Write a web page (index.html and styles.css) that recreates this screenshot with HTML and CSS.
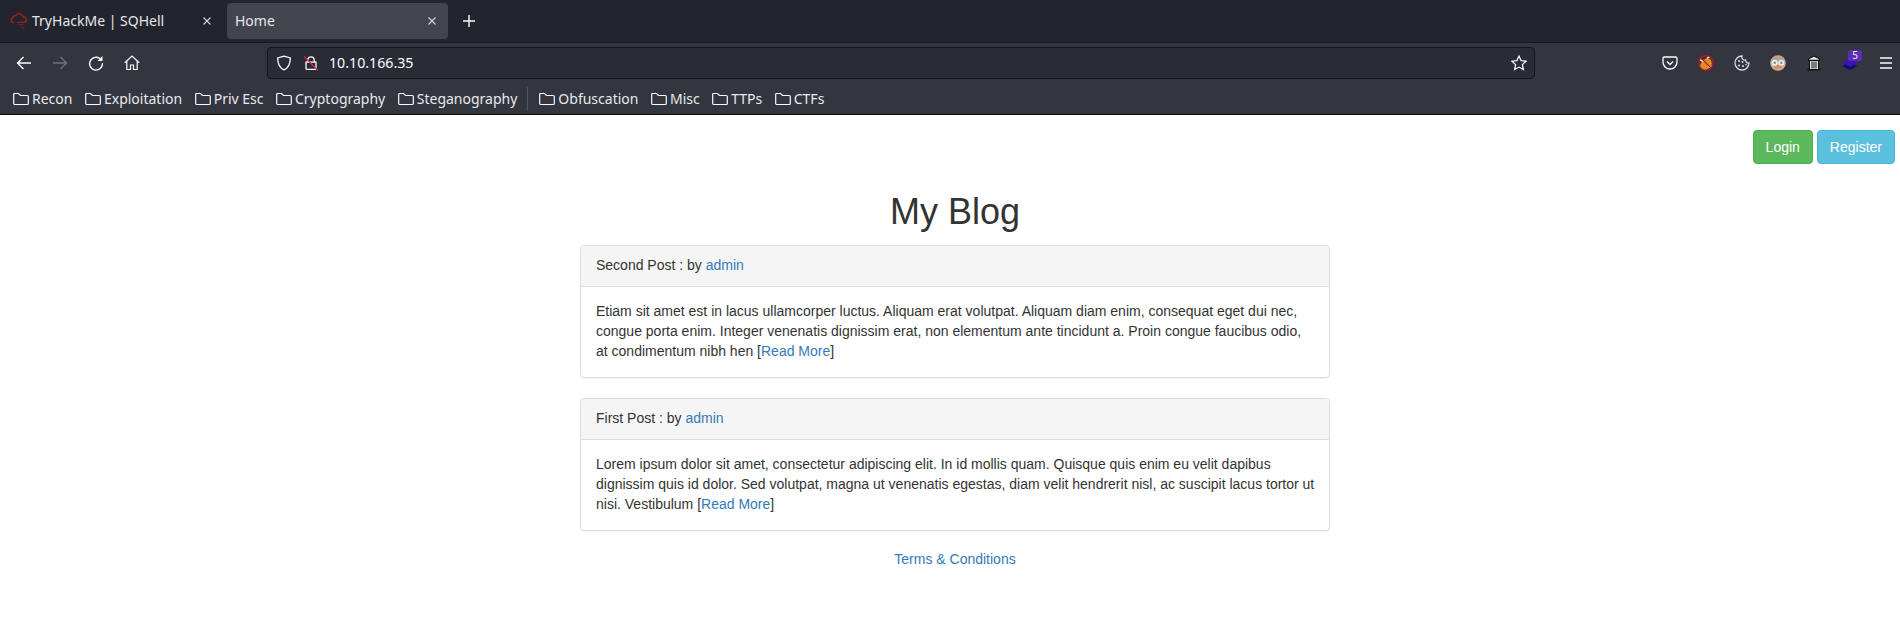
FILE: index.html
```html
<!DOCTYPE html>
<html lang="en">
<head>
<meta charset="utf-8">
<title>Home</title>
<link rel="stylesheet" href="styles.css">
</head>
<body>
<header class="browser">
  <div class="tabbar">
    <div class="tab">
      <svg class="favicon" viewBox="0 0 18 18" width="18" height="18" fill="none" stroke="#a81c24" stroke-width="1.4"><path d="M4 10.500H3a2.300 2.300 0 0 1-.3-4.500A3.200 3.200 0 0 1 6 3.400a4.200 4.200 0 0 1 7.400 1.600 2.800 2.800 0 0 1 1.300 5.400H7"/><path d="M9 12.500h4M11 15h3M13 17h2" stroke-width="1.200" stroke-dasharray="1.500 1"/></svg>
      <span class="tab-title">TryHackMe | SQHell</span>
      <svg class="tab-close" viewBox="0 0 10 10" width="10" height="10" stroke="#d5d6da" stroke-width="1.100"><path d="M1.500 1.500l7 7M8.500 1.500l-7 7"/></svg>
    </div>
    <div class="tab tab-active">
      <span class="tab-title">Home</span>
      <svg class="tab-close" viewBox="0 0 10 10" width="10" height="10" stroke="#d5d6da" stroke-width="1.100"><path d="M1.500 1.500l7 7M8.500 1.500l-7 7"/></svg>
    </div>
    <svg class="new-tab" viewBox="0 0 14 14" width="14" height="14" stroke="#fbfbfe" stroke-width="1.400"><path d="M7 1v12M1 7h12"/></svg>
  </div>
  <div class="toolbar">
    <div class="nav-buttons">
      <svg viewBox="0 0 16 16" width="16" height="16" fill="none" stroke="#fbfbfe" stroke-width="1.400"><path d="M15 8H1.500M7.500 2l-6 6 6 6"/></svg>
      <svg viewBox="0 0 16 16" width="16" height="16" fill="none" stroke="#6f7178" stroke-width="1.400"><path d="M1 8h13.500M8.500 2l6 6-6 6"/></svg>
      <svg viewBox="0 0 16 16" width="16" height="16" fill="none" stroke="#fbfbfe" stroke-width="1.400"><path d="M13.600 5.500A6.400 6.400 0 1 0 14.400 8"/><path d="M14.500 1v5h-5z" fill="#fbfbfe" stroke="none"/></svg>
      <svg viewBox="0 0 16 16" width="16" height="16" fill="none" stroke="#fbfbfe" stroke-width="1.200"><path d="M.8 7.800 8 1l7.200 6.800M2.800 6.500V14.500h3.700V10h3v4.500h3.700V6.500"/></svg>
    </div>
    <div class="urlbar">
      <svg viewBox="0 0 16 16" width="16" height="16" fill="none" stroke="#fbfbfe" stroke-width="1.300"><path d="M8 1.200 14.300 3c0 6-1.500 9.800-6.300 11.800C3.200 12.800 1.700 9 1.700 3z"/></svg>
      <svg class="lock" viewBox="0 0 16 16" width="16" height="16" fill="none" stroke="#fbfbfe" stroke-width="1.300"><path d="M4.800 7.200V5a3.200 3.200 0 0 1 6.400 0v2.200"/><path d="M3 7.200h10v6a1.200 1.200 0 0 1-1.200 1.200H4.200A1.200 1.200 0 0 1 3 13.200z"/><path d="M1 1.500 15 15.500" stroke="#e22850" stroke-width="1.100"/></svg>
      <span class="url">10.10.166.35</span>
      <svg class="star" viewBox="0 0 16 16" width="16" height="16" fill="none" stroke="#fbfbfe" stroke-width="1.200"><path d="M8 1l2.100 4.600 5 .6-3.700 3.400 1 5L8 12.100l-4.400 2.500 1-5L.9 6.200l5-.6z"/></svg>
    </div>
    <div class="addons">
      <svg viewBox="0 0 16 16" width="16" height="16" fill="none" stroke="#fbfbfe" stroke-width="1.300"><path d="M2.200 2h11.600A1.200 1.200 0 0 1 15 3.200V7A7 7 0 0 1 1 7V3.200A1.200 1.200 0 0 1 2.200 2z"/><path d="M5 6.500 8 9.500l3-3"/></svg>
      <svg viewBox="0 0 16 16" width="16" height="16" fill="none"><path d="M2 12c0-4 3.500-8 8-9l3 2 1 4c-1 4-5 6-9 6z" fill="#e08a22"/><path d="M1.500 4.500l4 2M10 11l3.500 1.500M9 3l3-1.500" stroke="#f0e8dc" stroke-width="1.700"/><circle cx="8" cy="8" r="7.300" stroke="#c4121c" stroke-width="1.200"/><path d="M3 3l10 10" stroke="#c4121c" stroke-width="1.100"/></svg>
      <svg viewBox="0 0 16 16" width="16" height="16" fill="none" stroke="#d8d9dc" stroke-width="1.300"><path d="M8 1A7 7 0 1 0 15 8 3 3 0 0 1 11.500 5 3 3 0 0 1 8 1z"/><g fill="#d8d9dc" stroke="none"><circle cx="5" cy="6" r="1.100"/><circle cx="8.500" cy="7" r="1"/><circle cx="5" cy="10.500" r="1.100"/><circle cx="9" cy="11" r="1.100"/><circle cx="12" cy="9.500" r=".8"/></g></svg>
      <svg viewBox="0 0 16 16" width="16" height="16"><circle cx="8" cy="8" r="7.800" fill="#d4ab8e"/><path d="M.5 7a7.800 7.800 0 0 1 15 0z" fill="#b8a088"/><path d="M3.500 12.500a6.500 6.500 0 0 0 9 0l-1.200-2.500H4.700z" fill="#d4906a"/><circle cx="4.700" cy="7.800" r="3" fill="#e6f0f2"/><circle cx="11.300" cy="7.800" r="3" fill="#e6f0f2"/><circle cx="4.700" cy="7.800" r="1.300" fill="#6d97a5"/><circle cx="11.300" cy="7.800" r="1.300" fill="#6d97a5"/></svg>
      <svg class="trash" viewBox="0 0 16 16" width="16" height="16"><path d="M2 3.500 8 .5l6 3V6h-1v7.500h1.500V15.500H1.500v-2H3V6H2z" fill="#0e0e10"/><path d="M3.200 3.900 8 1.700l4.800 2.200v.8H3.200zM4 6h8v8H4z" fill="#e4e4e4"/><path d="M6 6.500v7M8 6.500v7M10 6.500v7" stroke="#111" stroke-width="1"/></svg>
      <div class="stack">
        <svg viewBox="0 0 16 16" width="16" height="16"><path d="M8 7.500 15.500 11 8 15 .5 11z" fill="#17077a"/><path d="M8 3 15.500 7.500 8 12 .5 7.500z" fill="#3a16b4"/></svg>
        <span class="badge">5</span>
      </div>
      <svg viewBox="0 0 16 16" width="16" height="16" stroke="#fbfbfe" stroke-width="1.400"><path d="M2 3h12M2 8h12M2 13h12"/></svg>
    </div>
  </div>
  <nav class="bookmarks">
    <a class="bookmark"><svg viewBox="0 0 16 16" width="16" height="16"><use href="#folder"/></svg>Recon</a>
    <a class="bookmark"><svg viewBox="0 0 16 16" width="16" height="16"><use href="#folder"/></svg>Exploitation</a>
    <a class="bookmark"><svg viewBox="0 0 16 16" width="16" height="16"><use href="#folder"/></svg>Priv Esc</a>
    <a class="bookmark"><svg viewBox="0 0 16 16" width="16" height="16"><use href="#folder"/></svg>Cryptography</a>
    <a class="bookmark"><svg viewBox="0 0 16 16" width="16" height="16"><use href="#folder"/></svg>Steganography</a>
    <span class="bookmark-sep"></span>
    <a class="bookmark"><svg viewBox="0 0 16 16" width="16" height="16"><use href="#folder"/></svg>Obfuscation</a>
    <a class="bookmark"><svg viewBox="0 0 16 16" width="16" height="16"><use href="#folder"/></svg>Misc</a>
    <a class="bookmark"><svg viewBox="0 0 16 16" width="16" height="16"><use href="#folder"/></svg>TTPs</a>
    <a class="bookmark"><svg viewBox="0 0 16 16" width="16" height="16"><use href="#folder"/></svg>CTFs</a>
  </nav>
</header>
<svg class="defs" width="0" height="0"><defs><path id="folder" d="M1.500 13.500A1 1 0 0 1 .700 12.700V3.500A1 1 0 0 1 1.700 2.500H5.500L7.500 4.500H14.300A1 1 0 0 1 15.300 5.500V12.500A1 1 0 0 1 14.300 13.500Z" fill="none" stroke="#fbfbfe" stroke-width="1.200"/></defs></svg>
<main class="page">
  <div class="actions">
    <a class="btn btn-green">Login</a>
    <a class="btn btn-blue">Register</a>
  </div>
  <div class="blog">
    <h1 class="blog-title">My Blog</h1>
    <article class="panel">
      <div class="panel-heading">Second Post : by <a class="link">admin</a></div>
      <div class="panel-body">Etiam sit amet est in lacus ullamcorper luctus. Aliquam erat volutpat. Aliquam diam enim, consequat eget dui nec, congue porta enim. Integer venenatis dignissim erat, non elementum ante tincidunt a. Proin congue faucibus odio, at condimentum nibh hen [<a class="link">Read More</a>]</div>
    </article>
    <article class="panel">
      <div class="panel-heading">First Post : by <a class="link">admin</a></div>
      <div class="panel-body">Lorem ipsum dolor sit amet, consectetur adipiscing elit. In id mollis quam. Quisque quis enim eu velit dapibus dignissim quis id dolor. Sed volutpat, magna ut venenatis egestas, diam velit hendrerit nisl, ac suscipit lacus tortor ut nisi. Vestibulum [<a class="link">Read More</a>]</div>
    </article>
    <p class="terms"><a class="link">Terms &amp; Conditions</a></p>
  </div>
</main>
</body>
</html>
```
FILE: styles.css
```css
* { box-sizing: border-box; }
html, body { margin: 0; padding: 0; height: 100%; background: #fff; overflow: hidden; }
body { font-family: "Liberation Sans", Arial, sans-serif; font-size: 14px; line-height: 20px; color: #333; }
svg { display: block; flex: none; }
.defs { position: absolute; }

.browser { font-family: "Noto Sans", sans-serif; color: #fbfbfe; }
.tabbar { height: 43px; background: #22252e; border-bottom: 1px solid #16181e; display: flex; align-items: center; padding: 0 0 1px 0; }
.tab { width: 220px; height: 36px; margin-left: 3px; border-radius: 4px; display: flex; align-items: center; padding: 0 11px 0 7px; font-size: 14px; }
.tab:first-child { margin-right: 4px; }
.favicon { margin-right: 4px; }
.tab-title { flex: 1; color: #e6e7ea; }
.tab-active { background: #42454e; width: 221px; margin-left: 0; padding-left: 8px; }
.new-tab { margin-left: 14px; }

.toolbar { height: 36px; background: #33363f; display: flex; align-items: center; padding-top: 4px; }
.nav-buttons { display: flex; gap: 20px; padding-left: 16px; width: 267px; }
.urlbar { width: 1268px; height: 32px; background: #292c35; border: 1px solid #14161b; border-radius: 4px; display: flex; align-items: center; padding: 0 7px 0 8px; }
.lock { margin-left: 11px; }
.url { flex: 1; margin-left: 10px; font-size: 14.2px; color: #fbfbfe; }
.addons { flex: 1; display: flex; gap: 20px; padding-left: 127px; align-items: center; }
.stack { position: relative; }
.badge { position: absolute; top: -5px; left: 6px; width: 14px; height: 11px; border-radius: 2px; background: #5b2fb5; color: #eee8fb; font-size: 10px; line-height: 11px; text-align: center; }

.bookmarks { height: 36px; background: #33363f; border-bottom: 1px solid #0c0d10; display: flex; align-items: center; padding: 4px 0 0 13px; gap: 12.5px; font-size: 14px; color: #e8e9ec; }
.bookmark { display: flex; align-items: center; gap: 3px; }
.bookmark-sep { width: 1px; height: 24px; background: #50535b; margin-left: -3px; margin-right: -1px; }

.actions { display: flex; justify-content: flex-end; gap: 4px; padding: 15px 5px 0 0; }
.btn { display: block; padding: 6px 12px; border: 1px solid; border-radius: 4px; color: #fff; }
.btn-green { background: #5cb85c; border-color: #4cae4c; }
.btn-blue { background: #5bc0de; border-color: #46b8da; }

.blog { width: 750px; margin: 0 auto; position: relative; left: 5px; }
.blog-title { margin: 28px 0 13px; font-size: 36px; line-height: 40px; font-weight: 500; text-align: center; color: #333; }
.panel { background: #fff; border: 1px solid #ddd; border-radius: 4px; box-shadow: 0 1px 1px rgba(0,0,0,.05); margin-bottom: 20px; }
.panel-heading { padding: 9px 15px 11px; background: #f5f5f5; border-bottom: 1px solid #ddd; border-radius: 3px 3px 0 0; }
.panel-body { padding: 14px 13px 16px 15px; }
.link { color: #337ab7; }
.terms { margin: -2px 0 0; text-align: center; }
```
